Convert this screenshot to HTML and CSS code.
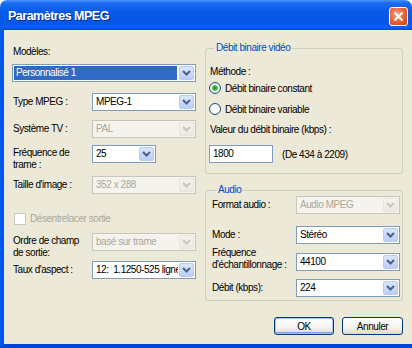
FILE: index.html
```html
<!DOCTYPE html>
<html lang="fr">
<head>
<meta charset="utf-8">
<title>Paramètres MPEG</title>
<link rel="stylesheet" href="styles.css">
</head>
<body>
<div class="window">
  <div class="titlebar">
    <span class="title">Paramètres MPEG</span>
    <span class="close"><svg width="11" height="11" viewBox="0 0 11 11"><path d="M1.5 1.5 L9.5 9.5 M9.5 1.5 L1.5 9.5" stroke="#fff" stroke-width="2.2" fill="none"/></svg></span>
  </div>
  <div class="frame">
    <div class="content">
      <div class="left">
        <div class="lbl-top">Modèles:</div>
        <div class="combo wide sel-combo"><span class="val selected">Personnalisé 1</span><span class="btn"><svg width="9" height="6" viewBox="0 0 9 6"><path d="M1 1 L4.5 4.5 L8 1" stroke="#4d6185" stroke-width="2" fill="none"/></svg></span></div>

        <div class="row r-type"><span class="lbl">Type MPEG :</span><div class="combo"><span class="val">MPEG-1</span><span class="btn"><svg width="9" height="6" viewBox="0 0 9 6"><path d="M1 1 L4.5 4.5 L8 1" stroke="#4d6185" stroke-width="2" fill="none"/></svg></span></div></div>

        <div class="row r-tv"><span class="lbl">Système TV :</span><div class="combo disabled"><span class="val">PAL</span><span class="btn"><svg width="9" height="6" viewBox="0 0 9 6"><path d="M1 1 L4.5 4.5 L8 1" stroke="#c9c7ba" stroke-width="2" fill="none"/></svg></span></div></div>

        <div class="row two r-freq"><span class="lbl">Fréquence de<br>trame :</span><div class="combo short"><span class="val">25</span><span class="btn"><svg width="9" height="6" viewBox="0 0 9 6"><path d="M1 1 L4.5 4.5 L8 1" stroke="#4d6185" stroke-width="2" fill="none"/></svg></span></div></div>

        <div class="row r-size"><span class="lbl">Taille d'image :</span><div class="combo disabled"><span class="val">352 x 288</span><span class="btn"><svg width="9" height="6" viewBox="0 0 9 6"><path d="M1 1 L4.5 4.5 L8 1" stroke="#c9c7ba" stroke-width="2" fill="none"/></svg></span></div></div>

        <div class="check r-check"><span class="box"></span><span class="dis-text">Désentrelacer sortie</span></div>

        <div class="row two r-order"><span class="lbl">Ordre de champ<br>de sortie:</span><div class="combo disabled"><span class="val">basé sur trame</span><span class="btn"><svg width="9" height="6" viewBox="0 0 9 6"><path d="M1 1 L4.5 4.5 L8 1" stroke="#c9c7ba" stroke-width="2" fill="none"/></svg></span></div></div>

        <div class="row r-aspect"><span class="lbl">Taux d'aspect :</span><div class="combo"><span class="val clip">12:&nbsp; 1.1250-525 lignes</span><span class="btn"><svg width="9" height="6" viewBox="0 0 9 6"><path d="M1 1 L4.5 4.5 L8 1" stroke="#4d6185" stroke-width="2" fill="none"/></svg></span></div></div>
      </div>

      <div class="right">
        <fieldset class="group g-video">
          <legend>Débit binaire vidéo</legend>
          <div class="methode">Méthode :</div>
          <div class="radio r1"><span class="dot checked"></span><span>Débit binaire constant</span></div>
          <div class="radio r2"><span class="dot"></span><span>Débit binaire variable</span></div>
          <div class="valeur">Valeur du débit binaire (kbps) :</div>
          <div class="input-row"><span class="textbox">1800</span><span class="range">(De 434 à 2209)</span></div>
        </fieldset>

        <fieldset class="group g-audio">
          <legend>Audio</legend>
          <div class="arow a-format"><span class="alb">Format audio :</span><div class="combo disabled"><span class="val">Audio MPEG</span><span class="btn"><svg width="9" height="6" viewBox="0 0 9 6"><path d="M1 1 L4.5 4.5 L8 1" stroke="#c9c7ba" stroke-width="2" fill="none"/></svg></span></div></div>
          <div class="arow a-mode"><span class="alb">Mode :</span><div class="combo"><span class="val">Stéréo</span><span class="btn"><svg width="9" height="6" viewBox="0 0 9 6"><path d="M1 1 L4.5 4.5 L8 1" stroke="#4d6185" stroke-width="2" fill="none"/></svg></span></div></div>
          <div class="arow two a-freq"><span class="alb">Fréquence<br>d'échantillonnage :</span><div class="combo"><span class="val">44100</span><span class="btn"><svg width="9" height="6" viewBox="0 0 9 6"><path d="M1 1 L4.5 4.5 L8 1" stroke="#4d6185" stroke-width="2" fill="none"/></svg></span></div></div>
          <div class="arow a-debit"><span class="alb">Débit (kbps):</span><div class="combo"><span class="val">224</span><span class="btn"><svg width="9" height="6" viewBox="0 0 9 6"><path d="M1 1 L4.5 4.5 L8 1" stroke="#4d6185" stroke-width="2" fill="none"/></svg></span></div></div>
        </fieldset>

        <div class="buttons">
          <span class="button default">OK</span>
          <span class="button">Annuler</span>
        </div>
      </div>
    </div>
  </div>
</div>
</body>
</html>
```

FILE: styles.css
```css
* { box-sizing: border-box; }
html, body { margin: 0; padding: 0; background: #ffffff; }
body {
  font-family: "Liberation Sans", Arial, sans-serif;
  font-size: 10px;
  letter-spacing: -0.45px;
  color: #000;
}
.window { width: 412px; height: 348px; display: flex; flex-direction: column; }
.titlebar {
  height: 30px;
  flex: none;
  display: flex;
  align-items: center;
  justify-content: space-between;
  padding: 2px 4px 0 8px;
  border-radius: 7px 7px 0 0;
  background: linear-gradient(#4a93f8 0%, #1a6cf0 10%, #075ae8 40%, #0657e6 80%, #0c61f2 90%, #0346d2 100%);
}
.title {
  color: #fff;
  font-weight: bold;
  font-size: 12.5px;
  letter-spacing: -0.5px;
  text-shadow: 1px 1px 0 #0a2a8a;
}
.close {
  width: 19px; height: 19px;
  display: flex; align-items: center; justify-content: center;
  border: 1px solid #fff;
  border-radius: 3px;
  background: radial-gradient(circle at 40% 35%, #f5a080 0%, #e85d30 55%, #cd401c 100%);
}
.frame {
  flex: 1;
  overflow: hidden;
  background: #ece9d8;
  border-left: 4px solid #0058ea;
  border-bottom: 4px solid #0046d5;
}
.content { display: flex; padding-left: 8px; }
.left { width: 184px; display: flex; flex-direction: column; }
.right { width: 198px; margin-left: 9px; display: flex; flex-direction: column; }

.lbl-top { margin-top: 16px; line-height: 12px; padding-left: 1px; }
.row { display: flex; align-items: center; }
.row.two { align-items: flex-start; }
.lbl { width: 80px; flex: none; line-height: 12px; padding-left: 1px; }
.row.two .lbl { padding-top: 2px; }

.combo {
  display: flex;
  width: 104px;
  height: 18px;
  border: 1px solid #7f9db9;
  background: #fff;
  flex: none;
}
.combo.wide { width: 184px; margin-top: 6px; }
.combo.short { width: 64px; }
.val { flex: 1; padding-left: 3px; line-height: 16px; white-space: nowrap; overflow: hidden; }
.val.selected { background: #316ac5; color: #fff; margin: 1px; line-height: 14px; padding-left: 2px; }
.btn {
  width: 15px; flex: none; margin: 1px;
  display: flex; align-items: center; justify-content: center;
  border: 1px solid #b9cbf3;
  border-radius: 2px;
  background: linear-gradient(#dbe6fd, #bccdf9);
}
.combo.disabled { border-color: #c9c7ba; background: #f4f3ee; color: #aca899; }
.combo.disabled .btn { border-color: #e8e6da; background: linear-gradient(#f5f4ec, #ebe9df); }

.r-type { margin-top: 11px; }
.r-tv { margin-top: 9px; }
.r-freq { margin-top: 7px; }
.r-size { margin-top: 5px; }
.check { display: flex; align-items: center; margin-top: 19px; height: 12px; padding-left: 2px; }
.box { width: 12px; height: 12px; border: 1px solid #cac8bb; background: #fff; margin-right: 4px; }
.dis-text { color: #aca899; line-height: 12px; }
.r-order { margin-top: 8px; }
.r-aspect { margin-top: 2px; }

.group {
  margin: 0;
  border: 1px solid #d0d0bf;
  border-radius: 3px;
  padding: 0 3px 0 4px;
  min-width: 0;
}
.group legend {
  color: #0046d5;
  padding: 0 2px;
  margin-left: 4px;
  line-height: 12px;
}
.g-video { margin-top: 12px; padding-bottom: 10px; }
.methode { margin-top: 12px; line-height: 12px; }
.radio { display: flex; align-items: center; height: 14px; margin-left: -1px; }
.radio.r1 { margin-top: 3px; }
.radio.r2 { margin-top: 7px; }
.dot {
  width: 12px; height: 12px; border-radius: 50%;
  border: 1px solid #1c5180;
  background: radial-gradient(circle at 50% 50%, #ffffff 40%, #dcdad0 100%);
  margin-right: 4px;
  display: flex; align-items: center; justify-content: center;
}
.dot.checked::after {
  content: "";
  width: 4px; height: 4px; border-radius: 50%;
  background: #21a121;
  box-shadow: 0 0 0 1px #5cd65c;
}
.valeur { margin-top: 8px; line-height: 12px; }
.input-row { display: flex; align-items: center; margin-top: 9px; margin-left: -1px; }
.textbox {
  width: 64px; height: 18px;
  border: 1px solid #7f9db9; background: #fff;
  padding-left: 3px; line-height: 16px;
}
.range { margin-left: 9px; }

.g-audio { margin-top: 10px; padding: 0 2px 3px 6px; }
.arow { display: flex; align-items: center; justify-content: space-between; }
.arow.two { align-items: flex-end; }
.alb { line-height: 12px; }
.a-format { margin-top: 0; }
.a-mode { margin-top: 12px; }
.a-freq { margin-top: 3px; }
.a-debit { margin-top: 8px; }

.buttons { display: flex; justify-content: flex-end; gap: 8px; margin-top: 16px; }
.button {
  width: 61px; height: 18px;
  display: flex; align-items: center; justify-content: center;
  border: 1px solid #003c74;
  border-radius: 3px;
  background: linear-gradient(#ffffff 0%, #f4f3ee 60%, #dcd9cd 100%);
}
.button.default { width: 60px; box-shadow: inset 0 0 0 1px #a8c4f5, inset 0 -1px 0 1px #7aa2e8; }
```
